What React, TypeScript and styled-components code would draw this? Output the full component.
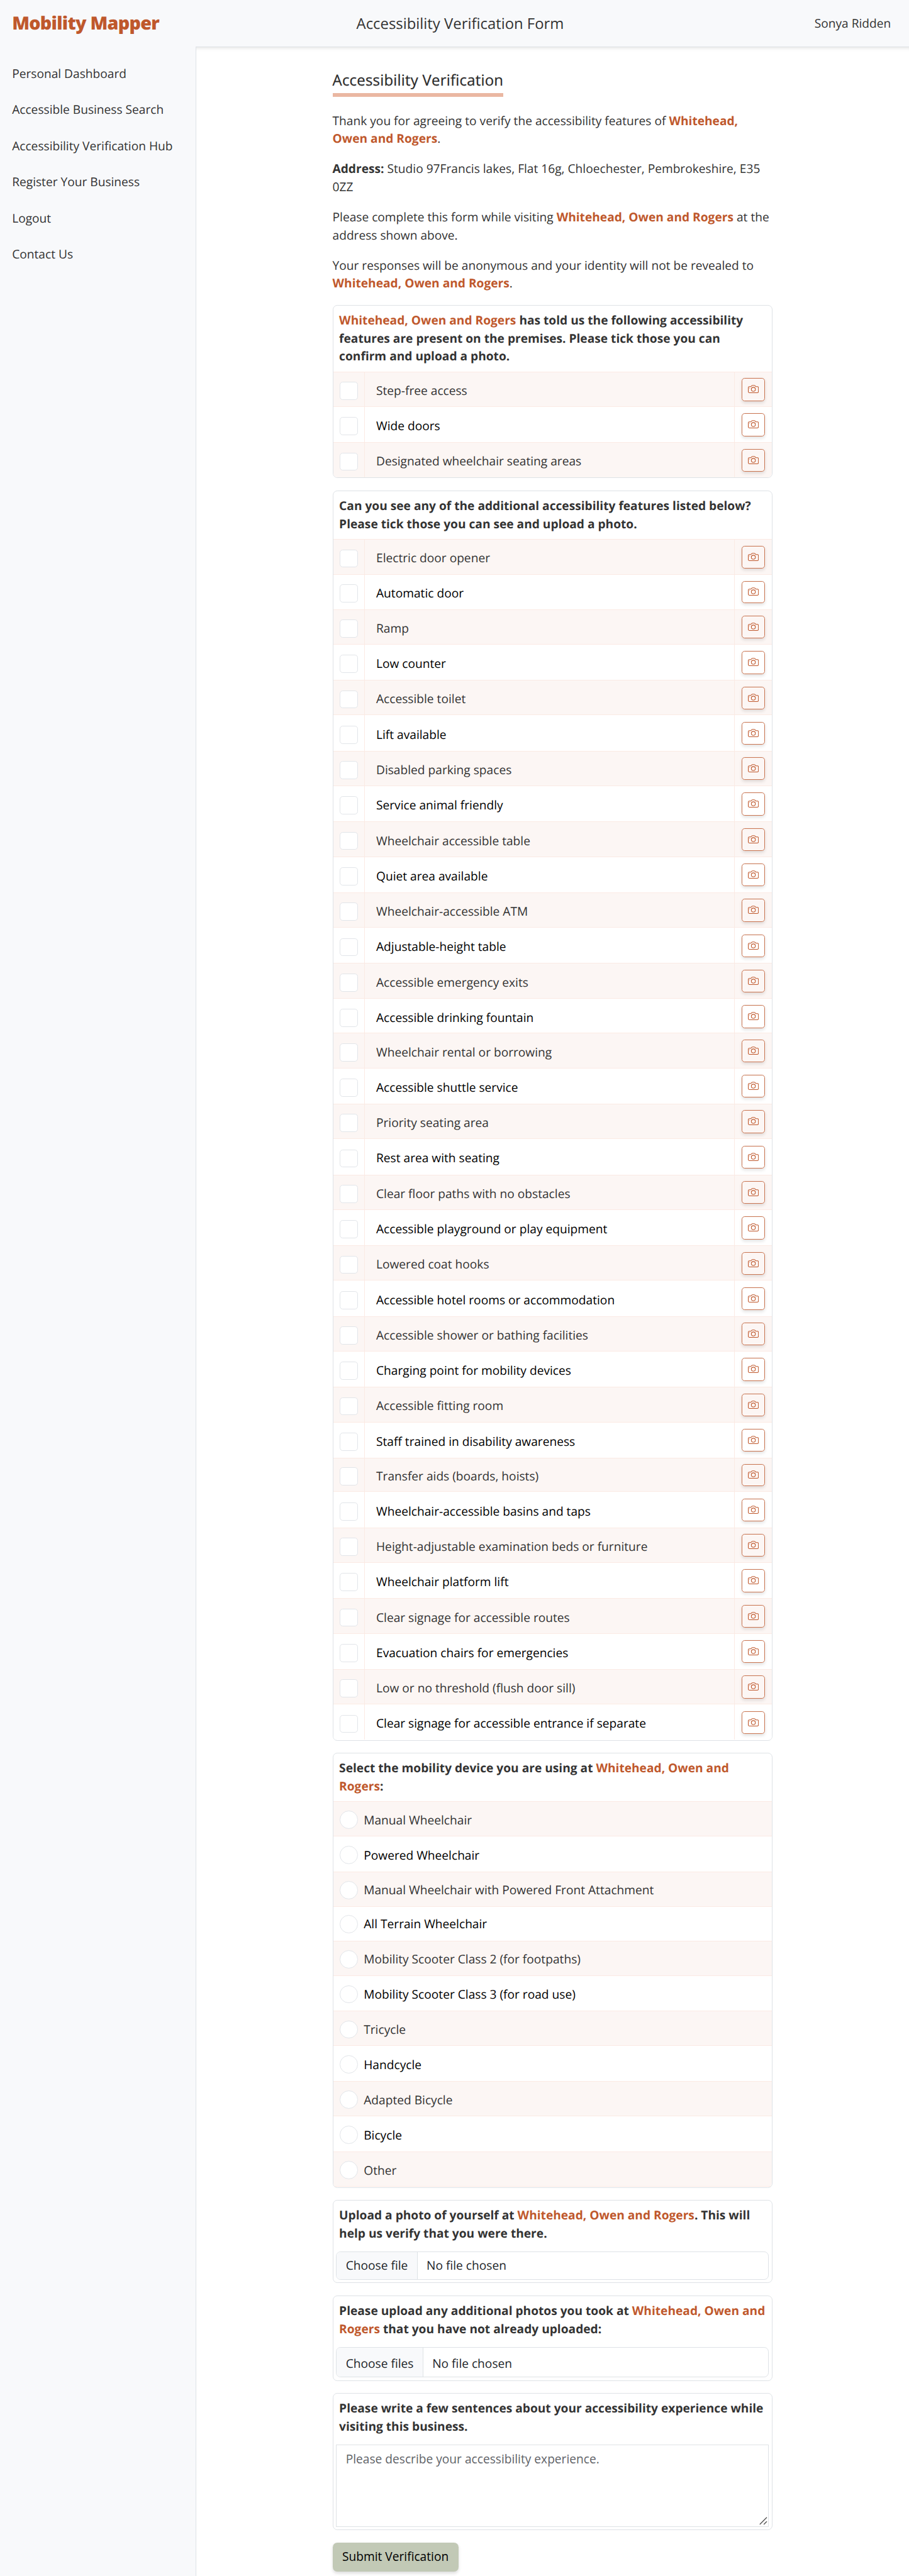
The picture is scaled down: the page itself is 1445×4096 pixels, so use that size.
import React from 'react';
import styled, { createGlobalStyle, css } from 'styled-components';
import { BsCamera } from 'react-icons/bs';

const SCALE = 0.7986;
const u = (n: number) => `${(n * SCALE).toFixed(3)}px`;

const color = {
  brand: '#bf582c',
  text: '#333333',
  bar: '#f8f9fb',
  line: '#dee2e6',
  stripe: '#fcf6f4',
  grid: '#fbeae4',
};

const GlobalStyle = createGlobalStyle`
  *, *::before, *::after { box-sizing: border-box; }
  body {
    margin: 0;
    background: #fff;
    color: ${color.text};
    font-family: "Open Sans", "Noto Sans", sans-serif;
    font-size: ${u(24)};
    line-height: ${u(36)};
    text-rendering: geometricPrecision;
  }
  button, textarea { font: inherit; color: inherit; }
`;

const Page = styled.div`
  display: flex;
  flex-direction: column;
  height: 4096px;
  overflow: hidden;
`;

const TopBar = styled.header`
  display: flex;
  align-items: center;
  height: ${u(92.5)};
  padding: 0 ${u(36)} 0 ${u(24)};
  background: ${color.bar};
`;

const Brand = styled.a`
  width: ${u(685.5)};
  color: ${color.brand};
  font-size: ${u(36)};
  font-weight: 800;
  letter-spacing: -0.025em;
`;

const BarTitle = styled.div`
  font-size: ${u(29.9)};
`;

const UserName = styled.div`
  margin-left: auto;
`;

const Body = styled.div`
  display: flex;
  flex: 1;
  min-height: 0;
`;

const Sidebar = styled.nav`
  display: flex;
  flex-direction: column;
  flex: none;
  gap: ${u(36)};
  width: ${u(389)};
  padding: ${u(36)} ${u(24)};
  background: ${color.bar};
`;

const NavItem = styled.a`
  white-space: nowrap;
`;

const Main = styled.main`
  display: flex;
  justify-content: center;
  flex: 1;
  border-top: 1px solid ${color.line};
  border-left: 1px solid ${color.line};
  box-shadow: inset 0 7px 6px -6px rgba(0, 0, 0, 0.13);
`;

const Form = styled.form`
  display: flex;
  flex-direction: column;
  align-items: flex-start;
  width: ${u(876)};
  padding-top: ${u(44)};
`;

const Heading = styled.h2`
  margin: 0 0 ${u(29.9)};
  height: ${u(54.7)};
  border-bottom: 6px solid #eab7a2;
  color: #2b2b2b;
  font-size: ${u(30)};
  font-weight: 400;
  letter-spacing: 0.22px;
  -webkit-text-stroke: 0.25px #2b2b2b;
  line-height: ${u(45)};
`;

const Paragraph = styled.p`
  margin: 0 0 ${u(24)};
  &:last-of-type { margin-bottom: ${u(24.8)}; }
`;

const Name = styled.strong`
  color: ${color.brand};
  font-weight: 700;
`;

const Card = styled.section<{ h: number; gap?: number }>`
  display: flex;
  flex-direction: column;
  flex: none;
  width: 100%;
  height: ${(p) => u(p.h)};
  margin-bottom: ${(p) => u(p.gap ?? 24.6)};
  overflow: hidden;
  border: 1px solid ${color.line};
  border-radius: ${u(9)};
`;

const CardTitle = styled.h3<{ lines: number }>`
  flex: none;
  height: ${(p) => u(p.lines * 36 + 23.5)};
  margin: 0;
  padding: ${u(11.3)} 0 0 ${u(12)};
  font-size: ${u(24)};
  font-weight: 700;
  white-space: nowrap;
`;

const striped = css<{ $odd: boolean }>`
  background: ${(p) => (p.$odd ? color.stripe : '#fff')};
  color: ${(p) => (p.$odd ? color.text : '#000')};
  box-shadow: ${(p) => (p.$odd ? `inset 0 1px ${color.grid}, inset 0 -1px ${color.grid}` : 'none')};
`;

const FeatureRow = styled.label<{ $odd: boolean; h: number }>`
  display: grid;
  grid-template-columns: ${u(61.5)} 1fr ${u(75)};
  flex: none;
  height: ${(p) => u(p.h)};
  ${striped}
`;

const Cell = styled.div`
  display: flex;
  align-items: flex-start;
  & + & { border-left: 1px solid ${color.grid}; }
`;

const LabelCell = styled(Cell)<{ $lift: number }>`
  padding: ${(p) => u(20.3 - p.$lift)} 0 0 ${u(23)};
`;

const Tick = styled.input<{ $round?: boolean; $lift: number }>`
  appearance: none;
  flex: none;
  width: ${u(36)};
  height: ${u(36)};
  margin: ${(p) => u((p.$round ? 19 : 20.6) - p.$lift)} 0 0 ${u(13)};
  background: #fff;
  border: 1px solid #e2e5e9;
  border-radius: ${(p) => (p.$round ? '50%' : u(6))};
`;

const PhotoButton = styled.button<{ $lift: number }>`
  display: flex;
  align-items: flex-start;
  justify-content: center;
  width: ${u(47)};
  height: ${(p) => u(45.5 - p.$lift)};
  margin: ${u(13.1)} 0 0 ${u(13)};
  padding: ${(p) => u(10 - p.$lift)} 0 0;
  background: transparent;
  border: 1px solid #c97450;
  border-radius: ${u(6)};
  box-shadow: 0 ${u(3)} ${u(6)} rgba(0, 0, 0, 0.11);
  color: ${color.brand};
`;

const DeviceRow = styled.label<{ $odd: boolean; h: number }>`
  display: flex;
  flex: none;
  height: ${(p) => u(p.h)};
  ${striped}
`;

const DeviceName = styled.span<{ $lift: number }>`
  padding: ${(p) => u(19.5 - p.$lift)} 0 0 ${u(12)};
`;

const FileInput = styled.div<{ h: number }>`
  display: flex;
  flex: none;
  height: ${(p) => u(p.h)};
  margin: ${u(6)} ${u(6)} 0;
  border: 1px solid ${color.line};
  border-radius: ${u(9)};
  overflow: hidden;
`;

const FileButton = styled.span`
  display: flex;
  align-items: flex-end;
  padding: 0 ${u(18)} ${u(8.6)};
  background: ${color.bar};
  border-right: 1px solid ${color.line};
  color: #212529;
`;

const FileStatus = styled.span`
  display: flex;
  align-items: flex-end;
  padding: 0 0 ${u(8.6)} ${u(18)};
  color: #212529;
`;

const CommentBox = styled.div`
  position: relative;
  display: flex;
  height: ${u(163)};
  margin: ${u(6)} ${u(6)} 0;
`;

const Comment = styled.textarea`
  flex: 1;
  margin: 0;
  padding: ${u(9)} ${u(18)};
  border: 1px solid ${color.line};
  outline: none;
  resize: none;
  &::placeholder { color: #5f6368; opacity: 1; }
`;

const Grip = styled.svg`
  position: absolute;
  right: ${u(3)};
  bottom: ${u(3)};
  width: ${u(16)};
  height: ${u(16)};
`;

const Submit = styled.button`
  flex: none;
  width: ${u(250.6)};
  height: ${u(57)};
  padding: 0;
  background: #c2c9b6;
  border: 0;
  border-radius: ${u(9)};
  box-shadow: 0 ${u(3)} ${u(6)} rgba(0, 0, 0, 0.13);
  color: #000;
`;

type Item = [label: string, height?: number, lift?: number];

const claimed: Item[] = [['Step-free access', 70.3], ['Wide doors'], ['Designated wheelchair seating areas']];

const additional: Item[] = [
  ['Electric door opener', 71],
  ['Automatic door', 68.4, 1.5],
  ['Ramp'],
  ['Low counter'],
  ['Accessible toilet'],
  ['Lift available'],
  ['Disabled parking spaces'],
  ['Service animal friendly'],
  ['Wheelchair accessible table'],
  ['Quiet area available'],
  ['Wheelchair-accessible ATM'],
  ['Adjustable-height table'],
  ['Accessible emergency exits'],
  ['Accessible drinking fountain', 68.3],
  ['Wheelchair rental or borrowing'],
  ['Accessible shuttle service'],
  ['Priority seating area'],
  ['Rest area with seating'],
  ['Clear floor paths with no obstacles'],
  ['Accessible playground or play equipment'],
  ['Lowered coat hooks'],
  ['Accessible hotel rooms or accommodation'],
  ['Accessible shower or bathing facilities'],
  ['Charging point for mobility devices'],
  ['Accessible fitting room'],
  ['Staff trained in disability awareness'],
  ['Transfer aids (boards, hoists)', 68.3, 1.5],
  ['Wheelchair-accessible basins and taps'],
  ['Height-adjustable examination beds or furniture'],
  ['Wheelchair platform lift'],
  ['Clear signage for accessible routes'],
  ['Evacuation chairs for emergencies'],
  ['Low or no threshold (flush door sill)'],
  ['Clear signage for accessible entrance if separate'],
];

const devices: Item[] = [
  ['Manual Wheelchair'],
  ['Powered Wheelchair'],
  ['Manual Wheelchair with Powered Front Attachment'],
  ['All Terrain Wheelchair', 67.5, 2.6],
  ['Mobility Scooter Class 2 (for footpaths)'],
  ['Mobility Scooter Class 3 (for road use)'],
  ['Tricycle'],
  ['Handcycle'],
  ['Adapted Bicycle'],
  ['Bicycle'],
  ['Other'],
];

const nav = [
  'Personal Dashboard',
  'Accessible Business Search',
  'Accessibility Verification Hub',
  'Register Your Business',
  'Logout',
  'Contact Us',
];

const Features = ({ items }: { items: Item[] }) => (
  <>
    {items.map(([label, h = 70.5, lift = 0], i) => (
      <FeatureRow key={label} $odd={i % 2 === 0} h={h}>
        <Cell>
          <Tick type="checkbox" $lift={lift} />
        </Cell>
        <LabelCell $lift={lift}>{label}</LabelCell>
        <Cell>
          <PhotoButton type="button" $lift={lift} aria-label={`Upload a photo: ${label}`}>
            <BsCamera size={21.5 * SCALE} />
          </PhotoButton>
        </Cell>
      </FeatureRow>
    ))}
  </>
);

export default function App() {
  return (
    <>
      <GlobalStyle />
      <Page>
        <TopBar>
          <Brand>Mobility Mapper</Brand>
          <BarTitle>Accessibility Verification Form</BarTitle>
          <UserName>Sonya Ridden</UserName>
        </TopBar>
        <Body>
          <Sidebar>
            {nav.map((n) => (
              <NavItem key={n}>{n}</NavItem>
            ))}
          </Sidebar>
          <Main>
            <Form>
              <Heading>Accessibility Verification</Heading>
              <Paragraph>
                Thank you for agreeing to verify the accessibility features of <Name>Whitehead,<br />Owen and Rogers</Name>.
              </Paragraph>
              <Paragraph>
                <strong>Address:</strong> Studio 97Francis lakes, Flat 16g, Chloechester, Pembrokeshire, E35<br />0ZZ
              </Paragraph>
              <Paragraph>
                Please complete this form while visiting <Name>Whitehead, Owen and Rogers</Name> at the<br />address shown above.
              </Paragraph>
              <Paragraph>
                Your responses will be anonymous and your identity will not be revealed to<br />
                <Name>Whitehead, Owen and Rogers</Name>.
              </Paragraph>

              <Card h={345}>
                <CardTitle lines={3}>
                  <Name>Whitehead, Owen and Rogers</Name> has told us the following accessibility<br />
                  features are present on the premises. Please tick those you can<br />
                  confirm and upload a photo.
                </CardTitle>
                <Features items={claimed} />
              </Card>

              <Card h={2489} gap={24}>
                <CardTitle lines={2}>
                  Can you see any of the additional accessibility features listed below?<br />
                  Please tick those you can see and upload a photo.
                </CardTitle>
                <Features items={additional} />
              </Card>

              <Card h={866.2}>
                <CardTitle lines={2}>
                  Select the mobility device you are using at <Name>Whitehead, Owen and<br />Rogers</Name>:
                </CardTitle>
                {devices.map(([label, h = 70, lift = 0], i) => (
                  <DeviceRow key={label} $odd={i % 2 === 0} h={h}>
                    <Tick type="radio" name="device" $round $lift={lift} />
                    <DeviceName $lift={lift}>{label}</DeviceName>
                  </DeviceRow>
                ))}
              </Card>

              <Card h={165.6}>
                <CardTitle lines={2}>
                  Upload a photo of yourself at <Name>Whitehead, Owen and Rogers</Name>. This will<br />
                  help us verify that you were there.
                </CardTitle>
                <FileInput h={56}>
                  <FileButton>Choose file</FileButton>
                  <FileStatus>No file chosen</FileStatus>
                </FileInput>
              </Card>

              <Card h={169.8}>
                <CardTitle lines={2}>
                  Please upload any additional photos you took at <Name>Whitehead, Owen and<br />Rogers</Name> that you have not already uploaded:
                </CardTitle>
                <FileInput h={60.3}>
                  <FileButton>Choose files</FileButton>
                  <FileStatus>No file chosen</FileStatus>
                </FileInput>
              </Card>

              <Card h={273.2}>
                <CardTitle lines={2}>
                  Please write a few sentences about your accessibility experience while<br />
                  visiting this business.
                </CardTitle>
                <CommentBox>
                  <Comment placeholder="Please describe your accessibility experience." />
                  <Grip viewBox="0 0 16 16" fill="none" stroke="#555" strokeWidth="1.8">
                    <path d="M1 15 15 1M9 15l6-6" />
                  </Grip>
                </CommentBox>
              </Card>

              <Submit type="button">Submit Verification</Submit>
            </Form>
          </Main>
        </Body>
      </Page>
    </>
  );
}
